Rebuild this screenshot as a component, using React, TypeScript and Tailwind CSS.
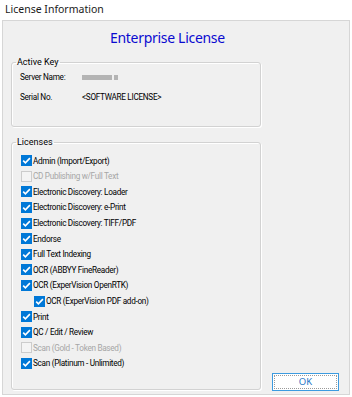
type Item = { label: string; checked?: boolean; disabled?: boolean; indent?: boolean }

const items: Item[] = [
  { label: 'Admin (Import/Export)', checked: true },
  { label: 'CD Publishing w/Full Text', disabled: true },
  { label: 'Electronic Discovery: Loader', checked: true },
  { label: 'Electronic Discovery: e-Print', checked: true },
  { label: 'Electronic Discovery: TIFF/PDF', checked: true },
  { label: 'Endorse', checked: true },
  { label: 'Full Text Indexing', checked: true },
  { label: 'OCR (ABBYY FineReader)', checked: true },
  { label: 'OCR (ExperVision OpenRTK)', checked: true },
  { label: 'OCR (ExperVision PDF add-on)', checked: true, indent: true },
  { label: 'Print', checked: true },
  { label: 'QC / Edit / Review', checked: true },
  { label: 'Scan (Gold - Token Based)', disabled: true },
  { label: 'Scan (Platinum - Unlimited)', checked: true },
]

function Box({ checked, disabled }: { checked?: boolean; disabled?: boolean }) {
  if (disabled) {
    return <span className="block h-[11px] w-[11px] shrink-0 border border-[#cccccc] bg-[#f4f4f4]" />
  }
  return (
    <svg className="shrink-0" width="11" height="11" viewBox="0 0 11 11">
      <rect x="0" y="0" width="11" height="11" fill="#0078d7" />
      {checked && <path d="M2.2 5.6 L4.4 7.8 L8.9 3.1" fill="none" stroke="#fff" strokeWidth="1.6" />}
    </svg>
  )
}

export default function App() {
  return (
    <div className="flex h-[397px] w-[352px] flex-col bg-white font-['Roboto',Arial,sans-serif] text-black">
      <div className="flex h-[20px] items-center pl-[5px] font-['Noto_Sans',sans-serif] text-[10.5px] text-[#1a1a1a]">License Information</div>
      <div className="mx-[2px] mb-[2px] flex flex-1 flex-col border border-[#d6d6d6] bg-[#f0f0f0]">
        <div className="pl-[107px] pt-[7px] font-['Noto_Sans',sans-serif] text-[14px] leading-[20px] tracking-[-0.3px] text-[#0a0ad0]">Enterprise License</div>
        <div className="flex flex-1">
          <div className="ml-[8px] flex w-[250px] flex-col">
            <fieldset className="mt-[7px] h-[72px] rounded-[3px] border border-[#d2d2d2] pl-[8px] shadow-[inset_1px_1px_0_#ffffff,1px_1px_0_#ffffff]">
              <legend className="ml-[-4px] px-[1px] text-[9px] leading-[14px]">Active Key</legend>
              <div className="mt-[1px] flex h-[14px] items-center text-[8.2px] tracking-[-0.3px]">
                <span className="w-[62px]">Server Name:</span>
                <span className="flex items-center gap-[2px] blur-[0.6px]">
                  <span className="h-[5px] w-[30px] bg-[#b4b4b4]" />
                  <span className="h-[5px] w-[4px] bg-[#b4b4b4]" />
                </span>
              </div>
              <div className="mt-[6px] flex h-[14px] items-center text-[8.2px] tracking-[-0.3px]">
                <span className="w-[62px]">Serial No.</span>
                <span>&lt;SOFTWARE LICENSE&gt;</span>
              </div>
            </fieldset>
            <fieldset className="mt-[8px] h-[255px] rounded-[3px] border border-[#d2d2d2] pl-[9px] pt-[4px] shadow-[inset_1px_1px_0_#ffffff,1px_1px_0_#ffffff]">
              <legend className="ml-[-5px] px-[1px] text-[9px] leading-[14px]">Licenses</legend>
              {items.map((it) => (
                <div key={it.label} className={`flex h-[15.6px] items-center gap-[1px] text-[8.2px] tracking-[-0.3px] ${it.indent ? 'pl-[13px]' : ''} ${it.disabled ? 'text-[#a6a6a6]' : ''}`}>
                  <Box checked={it.checked} disabled={it.disabled} />
                  <span>{it.label}</span>
                </div>
              ))}
            </fieldset>
          </div>
          <div className="ml-[11px] flex flex-col justify-end pb-[3px]">
            <button className="relative h-[18px] w-[67px] border border-[#3c9be0] bg-white font-['Noto_Sans',sans-serif] text-[9.5px] text-[#2a78c8]">
              <span className="absolute inset-[1px] border border-dotted border-[#9a9a9a]" />
              OK
            </button>
          </div>
        </div>
      </div>
    </div>
  )
}
